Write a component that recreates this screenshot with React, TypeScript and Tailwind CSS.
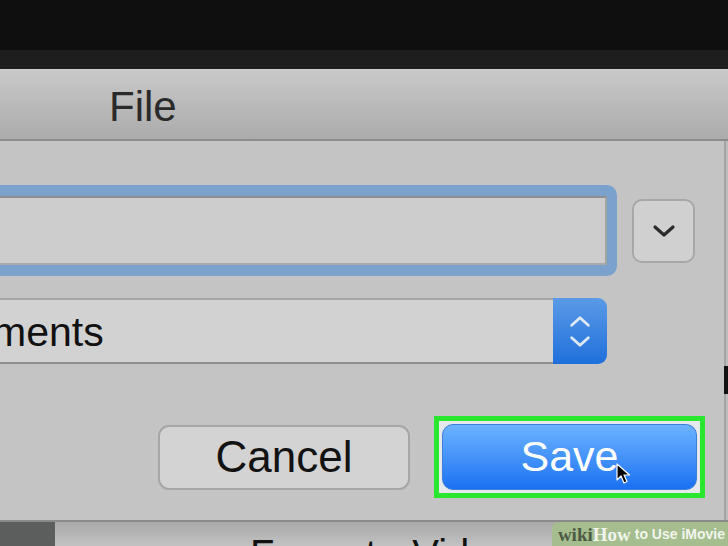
import React from "react";

const font = { fontFamily: '"Liberation Sans", Arial, sans-serif' };

function ChevronDown({ className }: { className?: string }) {
  return (
    <svg viewBox="0 0 24 14" className={className} fill="none">
      <path d="M3 3l9 8 9-8" stroke="currentColor" strokeWidth="3.2" strokeLinecap="round" strokeLinejoin="round" />
    </svg>
  );
}

function Stepper() {
  return (
    <div className="flex w-[54px] flex-col items-center justify-center gap-[7px] rounded-r-[9px] bg-gradient-to-b from-[#5a9ae6] to-[#1d6fdc]">
      <svg viewBox="0 0 24 14" className="h-[13px] w-[24px]" fill="none">
        <path d="M3 11l9-8 9 8" stroke="#dfe9f6" strokeWidth="3" strokeLinecap="round" strokeLinejoin="round" />
      </svg>
      <svg viewBox="0 0 24 14" className="h-[13px] w-[24px]" fill="none">
        <path d="M3 3l9 8 9-8" stroke="#dfe9f6" strokeWidth="3" strokeLinecap="round" strokeLinejoin="round" />
      </svg>
    </div>
  );
}

function Cursor() {
  return (
    <svg viewBox="0 0 14 22" className="absolute left-[616px] top-[463px] h-[22px] w-[14px]">
      <path d="M1 1v16l4-4 3 7 3-1.5-3-6.5h5.5z" fill="#000" stroke="#fff" strokeWidth="1.2" strokeLinejoin="round" />
    </svg>
  );
}

export default function App() {
  return (
    <div className="relative h-[546px] w-[728px] overflow-hidden bg-[#0f0f0f]" style={font}>
      <div className="h-[50px] bg-[#0f0f0f]" />
      <div className="h-[19px] bg-[#1e1e1e]" />
      <div className="h-px bg-[#d0d0d0]" />

      {/* title bar */}
      <div className="flex h-[71px] items-center border-b-2 border-[#8c8c8c] bg-gradient-to-b from-[#c9c9c9] to-[#ababab] pl-[109px]">
        <span className="pt-[5px] text-[42px] leading-none text-[#2a2a2a]">File</span>
      </div>

      {/* dialog body */}
      <div className="flex h-[379px]">
        <div className="flex flex-1 flex-col border-r-2 border-[#a3a3a3] bg-[#c4c4c4] pt-[44px]">
          <div className="flex items-center">
            <div className="h-[91px] w-[617px] rounded-r-[10px] bg-[#7ba1cd] py-[11px] pr-[10px]">
              <div className="h-full border-y-2 border-r-2 border-t-[#8e8e8e] border-b-[#a9a9a9] border-r-[#a3a3a3] bg-[#cdcdcd]" />
            </div>
            <div className="ml-[15px] flex h-[64px] w-[63px] items-center justify-center rounded-[10px] border-2 border-[#a7a7a7] bg-[#d0d0d0]">
              <ChevronDown className="h-[14px] w-[24px] text-[#2b2b2b]" />
            </div>
          </div>

          <div className="mt-[22px] flex h-[66px] w-[607px]">
            <div className="flex flex-1 items-center border-y-2 border-t-[#a4a4a4] border-b-[#8f8f8f] bg-[#d2d2d2]">
              <span className="ml-[-8px] pt-[2px] text-[41px] leading-none text-[#111]">ments</span>
            </div>
            <Stepper />
          </div>

          <div className="mt-[52px] flex items-center">
            <div className="ml-[158px] flex h-[65px] w-[252px] items-center justify-center rounded-[11px] border-2 border-[#a6a6a6] bg-[#d3d3d3]">
              <span className="text-[44px] leading-none text-[#121212]">Cancel</span>
            </div>
            <div className="ml-[24px] border-[5px] border-[#29e62e] bg-[#e6e9ec] p-[3px]">
              <div className="flex h-[66px] w-[255px] items-center justify-center rounded-[11px] border border-[#3d7fd9] bg-gradient-to-b from-[#6cb3ff] to-[#1a70f2]">
                <span className="pb-[2px] text-[43px] leading-none text-white">Save</span>
              </div>
            </div>
          </div>
        </div>
        <div className="w-[2px] bg-[#bcbcbc]" />
      </div>

      {/* below dialog */}
      <div className="flex h-[26px] border-t-2 border-[#8a8a8a]">
        <div className="w-[55px] bg-[#5c5e5e]" />
        <div className="flex flex-1 items-start overflow-hidden bg-gradient-to-b from-[#a9a9a9] to-[#c2c2c2] pl-[195px]">
          <span className="mt-[12px] whitespace-nowrap text-[40px] leading-none text-[#111]">Format · Video</span>
        </div>
      </div>

      <div className="absolute right-0 top-[366px] h-[28px] w-[4px] bg-[#111]" />
      <Cursor />

      <div className="absolute bottom-0 right-0 flex h-[24px] items-center whitespace-nowrap rounded-tl-[6px] bg-[#a5bd8f] pl-[6px] pr-[3px]">
        <span className="text-[19px] font-bold leading-none text-[#4e5a45]" style={{ fontFamily: '"Liberation Serif", serif' }}>wiki</span>
        <span className="text-[19px] font-bold leading-none text-[#f2f5ee]" style={{ fontFamily: '"Liberation Serif", serif' }}>How</span>
        <span className="ml-[4px] text-[14px] font-bold leading-none text-[#f2f5ee]">to Use iMovie</span>
      </div>
    </div>
  );
}
